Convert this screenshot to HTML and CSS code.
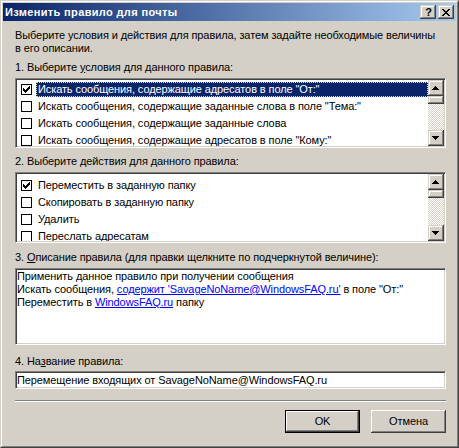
FILE: index.html
```html
<!DOCTYPE html>
<html lang="ru">
<head>
<meta charset="utf-8">
<title>Изменить правило для почты</title>
<link rel="stylesheet" href="styles.css">
</head>
<body>
<div class="window">
  <div class="frame">
    <div class="caption">
      <span class="title">Изменить правило для почты</span>
      <div class="cap-buttons">
        <span class="cap-btn help">?</span>
        <span class="cap-btn close">
          <svg width="8" height="7" viewBox="0 0 8 7" shape-rendering="crispEdges">
            <rect x="0" y="0" width="2" height="1"/><rect x="6" y="0" width="2" height="1"/>
            <rect x="1" y="1" width="2" height="1"/><rect x="5" y="1" width="2" height="1"/>
            <rect x="2" y="2" width="4" height="1"/>
            <rect x="3" y="3" width="2" height="1"/>
            <rect x="2" y="4" width="4" height="1"/>
            <rect x="1" y="5" width="2" height="1"/><rect x="5" y="5" width="2" height="1"/>
            <rect x="0" y="6" width="2" height="1"/><rect x="6" y="6" width="2" height="1"/>
          </svg>
        </span>
      </div>
    </div>

    <div class="content">
      <p class="intro">Выберите условия и действия для правила, затем задайте необходимые величины<br>в его описании.</p>

      <div class="label gap-l1">1. Выберите <u>у</u>словия для данного правила:</div>
      <div class="field listbox">
        <div class="rows">
          <div class="row">
            <span class="check"><svg width="11" height="11" viewBox="0 0 11 11" shape-rendering="crispEdges"><rect x="0.5" y="0.5" width="10" height="10" fill="#fff" stroke="#000"/><rect x="2" y="4" width="1" height="3"/><rect x="3" y="5" width="1" height="3"/><rect x="4" y="6" width="1" height="3"/><rect x="5" y="5" width="1" height="3"/><rect x="6" y="4" width="1" height="3"/><rect x="7" y="3" width="1" height="3"/><rect x="8" y="2" width="1" height="3"/></svg></span>
            <span class="item selected">Искать сообщения, содержащие адресатов в поле "От:"</span>
          </div>
          <div class="row">
            <span class="check"><svg width="11" height="11" viewBox="0 0 11 11" shape-rendering="crispEdges"><rect x="0.5" y="0.5" width="10" height="10" fill="#fff" stroke="#000"/></svg></span>
            <span class="item">Искать сообщения, содержащие заданные слова в поле "Тема:"</span>
          </div>
          <div class="row">
            <span class="check"><svg width="11" height="11" viewBox="0 0 11 11" shape-rendering="crispEdges"><rect x="0.5" y="0.5" width="10" height="10" fill="#fff" stroke="#000"/></svg></span>
            <span class="item">Искать сообщения, содержащие заданные слова</span>
          </div>
          <div class="row">
            <span class="check"><svg width="11" height="11" viewBox="0 0 11 11" shape-rendering="crispEdges"><rect x="0.5" y="0.5" width="10" height="10" fill="#fff" stroke="#000"/></svg></span>
            <span class="item">Искать сообщения, содержащие адресатов в поле "Кому:"</span>
          </div>
        </div>
        <div class="scrollbar">
          <span class="sb-btn"><svg width="7" height="4" viewBox="0 0 7 4" shape-rendering="crispEdges"><rect x="3" y="0" width="1" height="1"/><rect x="2" y="1" width="3" height="1"/><rect x="1" y="2" width="5" height="1"/><rect x="0" y="3" width="7" height="1"/></svg></span>
          <span class="track"><span class="thumb"></span></span>
          <span class="sb-btn"><svg width="7" height="4" viewBox="0 0 7 4" shape-rendering="crispEdges"><rect x="0" y="0" width="7" height="1"/><rect x="1" y="1" width="5" height="1"/><rect x="2" y="2" width="3" height="1"/><rect x="3" y="3" width="1" height="1"/></svg></span>
        </div>
      </div>

      <div class="label gap-l2">2. Выберите <u>д</u>ействия для данного правила:</div>
      <div class="field listbox second">
        <div class="rows">
          <div class="row">
            <span class="check"><svg width="11" height="11" viewBox="0 0 11 11" shape-rendering="crispEdges"><rect x="0.5" y="0.5" width="10" height="10" fill="#fff" stroke="#000"/><rect x="2" y="4" width="1" height="3"/><rect x="3" y="5" width="1" height="3"/><rect x="4" y="6" width="1" height="3"/><rect x="5" y="5" width="1" height="3"/><rect x="6" y="4" width="1" height="3"/><rect x="7" y="3" width="1" height="3"/><rect x="8" y="2" width="1" height="3"/></svg></span>
            <span class="item">Переместить в заданную папку</span>
          </div>
          <div class="row">
            <span class="check"><svg width="11" height="11" viewBox="0 0 11 11" shape-rendering="crispEdges"><rect x="0.5" y="0.5" width="10" height="10" fill="#fff" stroke="#000"/></svg></span>
            <span class="item">Скопировать в заданную папку</span>
          </div>
          <div class="row">
            <span class="check"><svg width="11" height="11" viewBox="0 0 11 11" shape-rendering="crispEdges"><rect x="0.5" y="0.5" width="10" height="10" fill="#fff" stroke="#000"/></svg></span>
            <span class="item">Удалить</span>
          </div>
          <div class="row">
            <span class="check"><svg width="11" height="11" viewBox="0 0 11 11" shape-rendering="crispEdges"><rect x="0.5" y="0.5" width="10" height="10" fill="#fff" stroke="#000"/></svg></span>
            <span class="item">Переслать адресатам</span>
          </div>
        </div>
        <div class="scrollbar">
          <span class="sb-btn"><svg width="7" height="4" viewBox="0 0 7 4" shape-rendering="crispEdges"><rect x="3" y="0" width="1" height="1"/><rect x="2" y="1" width="3" height="1"/><rect x="1" y="2" width="5" height="1"/><rect x="0" y="3" width="7" height="1"/></svg></span>
          <span class="track"><span class="thumb"></span></span>
          <span class="sb-btn"><svg width="7" height="4" viewBox="0 0 7 4" shape-rendering="crispEdges"><rect x="0" y="0" width="7" height="1"/><rect x="1" y="1" width="5" height="1"/><rect x="2" y="2" width="3" height="1"/><rect x="3" y="3" width="1" height="1"/></svg></span>
        </div>
      </div>

      <div class="label gap-l3">3. <u>О</u>писание правила (для правки щелкните по подчеркнутой величине):</div>
      <div class="field desc">
        <div>Применить данное правило при получении сообщения</div>
        <div>Искать сообщения, <a class="link" href="#">содержит 'SavageNoName@WindowsFAQ.ru'</a> в поле "От:"</div>
        <div>Переместить в <a class="link" href="#">WindowsFAQ.ru</a> папку</div>
      </div>

      <div class="label gap-l4">4. На<u>з</u>вание правила:</div>
      <div class="field name-input">Перемещение входящих от SavageNoName@WindowsFAQ.ru</div>

      <div class="separator"></div>

      <div class="buttons">
        <span class="button default">OK</span>
        <span class="button">Отмена</span>
      </div>
    </div>
  </div>
</div>
</body>
</html>
```

FILE: styles.css
```css
* { box-sizing: border-box; }

html, body {
  margin: 0;
  padding: 0;
  background: #d4d0c8;
}

body {
  font-family: "Liberation Sans", Arial, sans-serif;
  font-size: 11px;
  line-height: 13px;
  letter-spacing: -0.1px;
  color: #000;
}

.window {
  width: 459px;
  height: 448px;
  border: 1px solid;
  border-color: #d4d0c8 #404040 #404040 #d4d0c8;
}

.frame {
  height: 100%;
  border: 1px solid;
  border-color: #fff #808080 #808080 #fff;
  padding: 1px;
  background: #d4d0c8;
  display: flex;
  flex-direction: column;
}

.caption {
  height: 18px;
  flex: none;
  display: flex;
  align-items: center;
  justify-content: space-between;
  padding: 0 2px 0 2px;
  background: linear-gradient(to right, #0a246a, #a6caf0);
}

.title {
  color: #fff;
  font-weight: bold;
  font-size: 11px;
  letter-spacing: 0.35px;
  white-space: nowrap;
}

.cap-buttons {
  display: flex;
  gap: 2px;
}

.cap-btn {
  width: 16px;
  height: 14px;
  display: flex;
  align-items: center;
  justify-content: center;
  background: #d4d0c8;
  box-shadow: inset -1px -1px #404040, inset 1px 1px #d4d0c8, inset -2px -2px #808080, inset 2px 2px #fff;
}

.cap-btn.help {
  font-weight: bold;
  font-size: 11px;
  line-height: 12px;
  padding-left: 1px;
}

.content {
  flex: 1;
  padding: 8px 10px 0 12px;
  display: flex;
  flex-direction: column;
}

.intro {
  margin: 0;
  white-space: nowrap;
}

.label { white-space: nowrap; }
.gap-l1 { margin-top: 6px; }
.gap-l2 { margin-top: 7px; }
.gap-l3 { margin-top: 8px; }
.gap-l4 { margin-top: 10px; }

.field {
  background: #fff;
  border: 1px solid;
  border-color: #808080 #fff #fff #808080;
  padding: 1px;
  box-shadow: inset 1px 1px #404040, inset -1px -1px #d4d0c8;
}

.listbox {
  margin-top: 4px;
  height: 70px;
  display: flex;
  overflow: hidden;
}

.listbox.second { height: 71px; }

.rows {
  flex: 1;
  display: flex;
  flex-direction: column;
  overflow: hidden;
  padding-top: 1px;
}

.listbox.second .rows { padding-top: 3px; }

.row {
  height: 17px;
  flex: none;
  display: flex;
  align-items: center;
}

.check {
  width: 11px;
  height: 11px;
  margin-left: 4px;
  display: block;
  flex: none;
}

.check svg { display: block; }

.item {
  flex: 1;
  margin-left: 4px;
  height: 15px;
  line-height: 13px;
  padding: 0 1px;
  border: 1px solid transparent;
  white-space: nowrap;
}

.item.selected {
  background: #0a246a;
  color: #fff;
  border: 1px dotted #f5db95;
}

.scrollbar {
  width: 16px;
  flex: none;
  display: flex;
  flex-direction: column;
}

.sb-btn {
  width: 16px;
  height: 16px;
  flex: none;
  display: flex;
  align-items: center;
  justify-content: center;
  background: #d4d0c8;
  box-shadow: inset -1px -1px #404040, inset 1px 1px #d4d0c8, inset -2px -2px #808080, inset 2px 2px #fff;
}

.sb-btn svg { display: block; margin-left: -1px; }

.track {
  flex: 1;
  display: flex;
  flex-direction: column;
  background: repeating-conic-gradient(#d4d0c8 0 25%, #fff 0 50%) 0 0 / 2px 2px;
}

.thumb {
  height: 8px;
  background: #d4d0c8;
  box-shadow: inset -1px -1px #404040, inset 1px 1px #d4d0c8, inset -2px -2px #808080, inset 2px 2px #fff;
}

.desc {
  margin-top: 4px;
  height: 77px;
  padding: 1px 1px;
  white-space: nowrap;
}

.link {
  color: #0000ff;
  text-decoration: underline;
}

.name-input {
  margin-top: 3px;
  height: 18px;
  padding: 1px 1px;
  line-height: 14px;
  white-space: nowrap;
}

.separator {
  margin-top: 11px;
  border-top: 1px solid #808080;
  border-bottom: 1px solid #fff;
}

.buttons {
  margin-top: 8px;
  display: flex;
  justify-content: flex-end;
  gap: 11px;
}

.button {
  width: 75px;
  height: 23px;
  display: flex;
  align-items: center;
  justify-content: center;
  background: #d4d0c8;
  box-shadow: inset -1px -1px #404040, inset 1px 1px #fff, inset -2px -2px #808080, inset 2px 2px #d4d0c8;
}

.button.default {
  border: 1px solid #000;
}
```
